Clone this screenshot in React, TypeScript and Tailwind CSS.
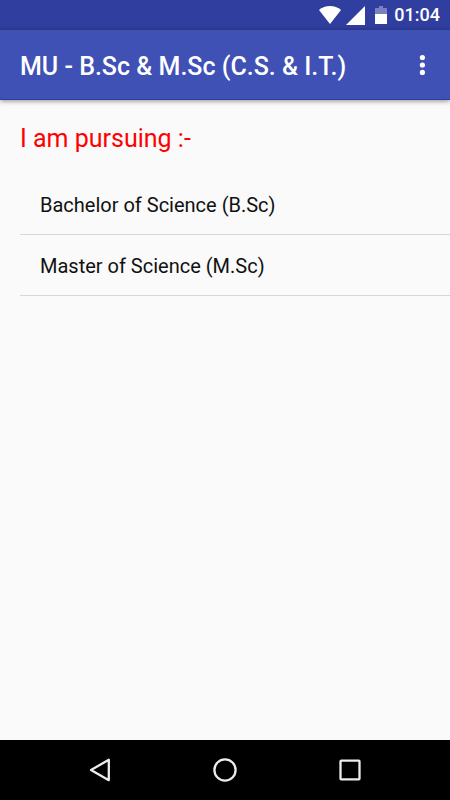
const programmes = ["Bachelor of Science (B.Sc)", "Master of Science (M.Sc)"];

export default function App() {
  return (
    <div className="flex min-h-screen flex-col bg-[#fafafa] font-[Roboto,sans-serif] text-[#111]">
      <div className="flex h-[30px] items-center justify-end bg-[#303f9f] pr-[10px] text-white">
        <svg className="mr-[5px] h-[18px] w-[22px]" viewBox="0 0 22 18" fill="currentColor" aria-hidden="true">
          <path d="M0 4C6-1.300 16-1.300 22 4L11 18Z" />
        </svg>
        <svg className="mr-[10px] h-[19px] w-[19px]" viewBox="0 0 19 19" fill="currentColor" aria-hidden="true">
          <path d="M0 19L19 0V19Z" />
        </svg>
        <svg className="mr-[7px] h-[18px] w-[12px]" viewBox="0 0 12 18" fill="currentColor" aria-hidden="true">
          <path d="M0 2.500Q0 2 .5 2H4V0H8V2H11.500Q12 2 12 2.500V8H0Z" opacity=".35" />
          <path d="M0 8H12V17.500Q12 18 11.500 18H.5Q0 18 0 17.500Z" />
        </svg>
        <span className="text-[18px] leading-[30px] font-medium">01:04</span>
      </div>
      <header className="flex h-[70px] items-center justify-between border-b border-[#2a3f9f] bg-[#3f51b5] pr-4 pl-5 text-white shadow-[0_1px_5px_rgba(0,0,0,0.45)]">
        <h1 className="pt-1 text-[25px] leading-8 font-medium whitespace-nowrap">MU - B.Sc &amp; M.Sc (C.S. &amp; I.T.)</h1>
        <button type="button" aria-label="More options" className="flex h-10 w-6 items-center justify-center">
          <svg className="h-[21px] w-[6px]" viewBox="0 0 6 21" fill="currentColor" aria-hidden="true">
            <circle cx="3.400" cy="3.500" r="2.600" />
            <circle cx="3.400" cy="11" r="2.600" />
            <circle cx="3.400" cy="18.400" r="2.600" />
          </svg>
        </button>
      </header>
      <main className="flex-1 pt-[21px] pl-5">
        <h2 className="text-[25px] leading-9 text-[#ff0000]">I am pursuing :-</h2>
        <ul className="pt-[17px] text-[20px]">
          {programmes.map((name) => (
            <li key={name} className="border-b border-[#d7d7d7]">
              <button type="button" className="block h-[60px] w-full pt-px pl-5 text-left">{name}</button>
            </li>
          ))}
        </ul>
      </main>
      <nav className="flex h-[60px] items-center justify-center gap-[101px] bg-black text-[#ececec]">
        <button type="button" aria-label="Back" className="flex h-10 w-6 items-center justify-center">
          <svg className="h-6 w-6" viewBox="0 0 24 24" fill="none" stroke="currentColor" strokeWidth="2.300" aria-hidden="true">
            <path d="M3 12L20.800 1.800V22.200Z" strokeLinejoin="round" />
          </svg>
        </button>
        <button type="button" aria-label="Home" className="flex h-10 w-6 items-center justify-center">
          <svg className="h-6 w-6" viewBox="0 0 24 24" fill="none" stroke="currentColor" strokeWidth="2.300" aria-hidden="true">
            <circle cx="12" cy="12" r="10.600" />
          </svg>
        </button>
        <button type="button" aria-label="Recent apps" className="flex h-10 w-6 items-center justify-center">
          <svg className="h-6 w-6" viewBox="0 0 24 24" fill="none" stroke="currentColor" strokeWidth="2.300" aria-hidden="true">
            <rect x="2.500" y="2.700" width="19" height="18.600" rx=".7" />
          </svg>
        </button>
      </nav>
    </div>
  );
}
